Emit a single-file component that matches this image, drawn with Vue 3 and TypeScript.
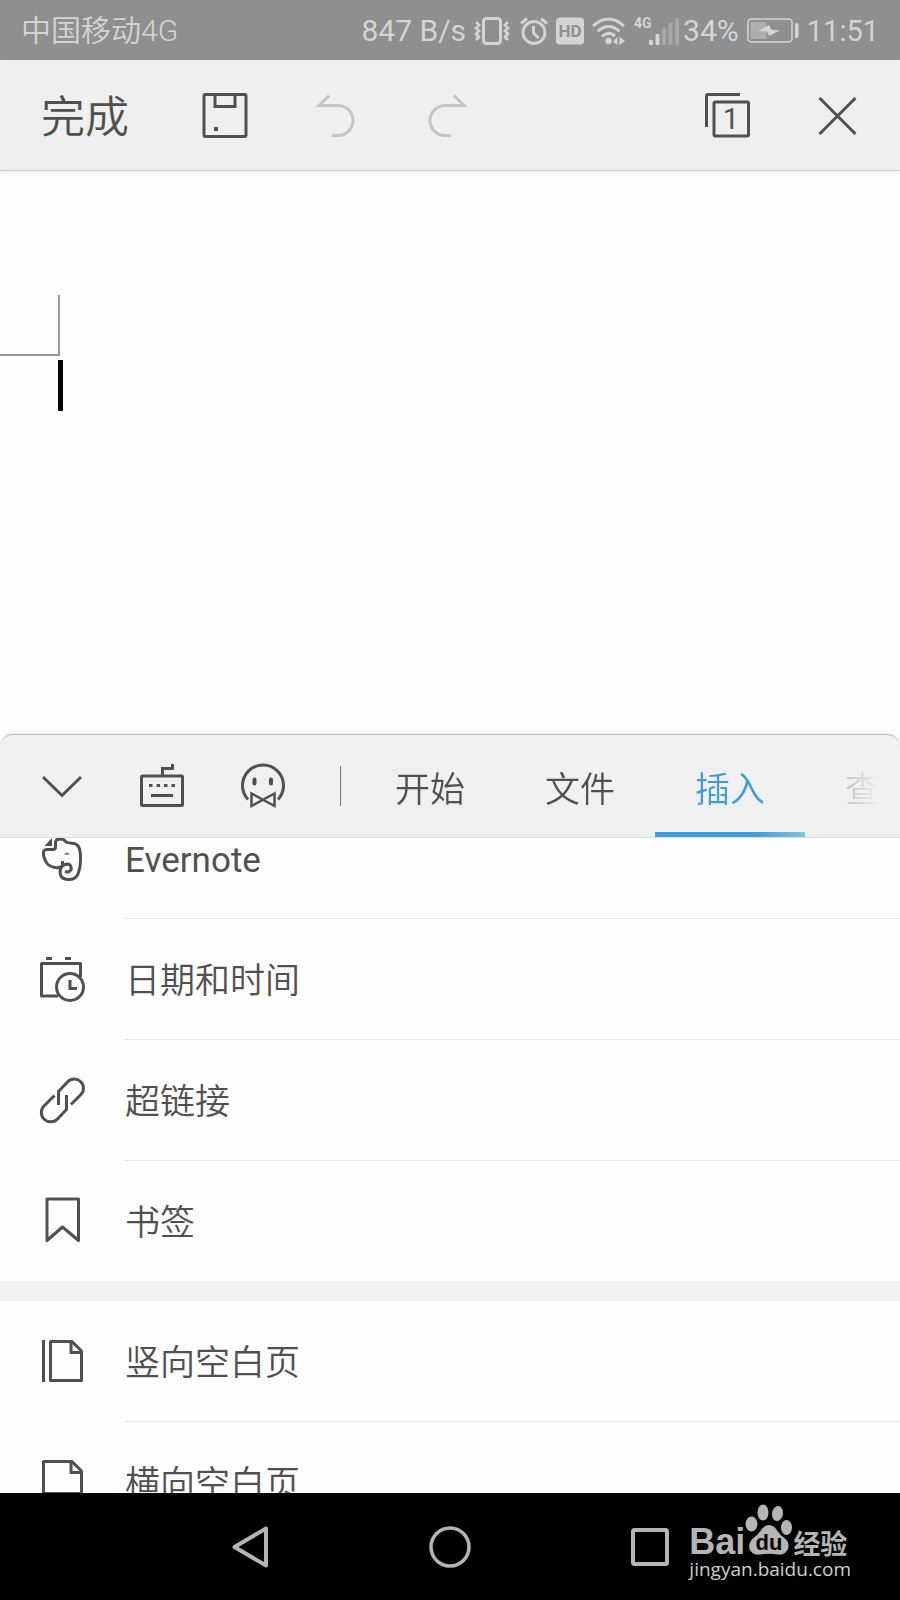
<script setup lang="ts">
import { onMounted, ref } from 'vue'

interface Row {
  id: string
  label: string
}

const tabs: string[] = ['开始', '文件', '插入', '查看']
const activeTab = ref<string>('插入')

const groups: Row[][] = [
  [
    { id: 'evernote', label: 'Evernote' },
    { id: 'datetime', label: '日期和时间' },
    { id: 'link', label: '超链接' },
    { id: 'bookmark', label: '书签' },
  ],
  [
    { id: 'portrait', label: '竖向空白页' },
    { id: 'landscape', label: '横向空白页' },
  ],
]

const list = ref<HTMLElement | null>(null)

onMounted(() => {
  if (list.value) list.value.scrollTop = 40
})
</script>

<template>
  <div class="screen">
    <header class="status">
      <span class="carrier">中国移动4G</span>
      <div class="status-right">
        <span>847 B/s</span>
        <svg class="vibrate" width="36" height="28" viewBox="0 0 36 28" fill="none" stroke="currentColor" stroke-width="3">
          <rect x="9.500" y="1.500" width="17" height="25" rx="3" />
          <path d="M2 5l3 3-3 3 3 3-3 3 3 3-3 3M34 5l-3 3 3 3-3 3 3 3-3 3 3 3" stroke-width="2.800" />
        </svg>
        <svg width="28" height="28" viewBox="0 0 28 28" fill="none" stroke="currentColor" stroke-width="3">
          <circle cx="14" cy="15.500" r="11" />
          <path d="M13.500 9v7l5 5M1 6.500L7 1.500M27 6.500L21 1.500" />
        </svg>
        <svg width="28" height="28" viewBox="0 0 28 28">
          <rect width="28" height="27" y="0.500" rx="4" fill="currentColor" />
          <text x="14" y="20" text-anchor="middle" class="hd">HD</text>
        </svg>
        <svg width="34" height="28" viewBox="0 0 34 28" fill="none" stroke="currentColor" stroke-width="3">
          <path d="M1 9Q16.500-5 32 9M5.500 14.500Q16.500 4.500 27.500 14.500M10 19.500Q16.500 13.500 23 19" />
          <circle cx="16.500" cy="24" r="3.200" fill="currentColor" stroke="none" />
          <path d="M21 25l4.500-5.500V28zM27.500 19.500L33 24l-5.500 4z" fill="currentColor" stroke="none" />
        </svg>
        <svg width="45" height="30" viewBox="0 0 45 30" fill="currentColor">
          <text x="0" y="12" class="net">4G</text>
          <rect x="15" y="24" width="4" height="5" rx="1" />
          <rect x="21.500" y="18" width="4" height="11" rx="1" />
          <g opacity="0.350">
            <rect x="28" y="12" width="4" height="17" rx="1" />
            <rect x="34.500" y="7" width="4" height="22" rx="1" />
            <rect x="41" y="2" width="4" height="27" rx="1" />
          </g>
        </svg>
        <span class="percent">34%</span>
        <svg width="52" height="26" viewBox="0 0 52 26" fill="none">
          <rect x="1" y="1" width="44" height="23" rx="3.500" stroke="currentColor" stroke-width="1.600" />
          <rect x="3.500" y="4" width="16" height="17" fill="currentColor" opacity="0.450" />
          <path d="M11 13l11-6 2 4.500 9 1L22 18l-2-4.500z" fill="currentColor" />
          <rect x="48" y="5" width="3.500" height="15" rx="1.500" fill="currentColor" />
        </svg>
        <span class="time">11:51</span>
      </div>
    </header>

    <div class="toolbar">
      <button class="done" type="button">完成</button>
      <button class="tool" type="button" aria-label="保存">
        <svg width="48" height="48" viewBox="0 0 48 48" fill="none" stroke="currentColor" stroke-width="3">
          <rect x="3" y="2.500" width="42" height="42" rx="1.500" />
          <path d="M14 3v11.500h20V3" />
          <rect x="13" y="35" width="4" height="4" fill="currentColor" stroke="none" />
        </svg>
      </button>
      <button class="tool faded" type="button" aria-label="撤销">
        <svg width="48" height="48" viewBox="0 0 48 48" fill="none" stroke="currentColor" stroke-width="3">
          <path d="M18 3.500L8 13.500H27A15 15 0 0 1 27 43.500H21" />
        </svg>
      </button>
      <button class="tool faded" type="button" aria-label="恢复">
        <svg width="48" height="48" viewBox="0 0 48 48" fill="none" stroke="currentColor" stroke-width="3">
          <path d="M33 3.500L43 13.500H24A15 15 0 0 0 24 43.500H30" />
        </svg>
      </button>
      <span class="spacer"></span>
      <button class="tool" type="button" aria-label="文档窗口">
        <svg width="48" height="48" viewBox="0 0 48 48" fill="none" stroke="currentColor" stroke-width="3">
          <path d="M2.500 35V4Q2.500 2.500 4 2.500H36" />
          <rect x="10" y="10" width="34.500" height="34" rx="1.500" />
          <text x="27" y="37" text-anchor="middle" class="count">1</text>
        </svg>
      </button>
      <button class="tool" type="button" aria-label="关闭">
        <svg width="48" height="48" viewBox="0 0 48 48" fill="none" stroke="currentColor" stroke-width="3">
          <path d="M5.500 6L41.500 42M41.500 6L5.500 42" />
        </svg>
      </button>
    </div>

    <main class="page">
      <div class="margin-mark"></div>
      <div class="caret"></div>
    </main>

    <section class="panel">
      <div class="panel-head">
        <button class="mode" type="button" aria-label="收起">
          <svg width="48" height="48" viewBox="0 0 48 48" fill="none" stroke="currentColor" stroke-width="3">
            <path d="M5 15L24 33.500L43 15" />
          </svg>
        </button>
        <button class="mode" type="button" aria-label="键盘">
          <svg width="48" height="48" viewBox="0 0 48 48" fill="none" stroke="currentColor" stroke-width="3">
            <rect x="3.500" y="14" width="41" height="29.500" rx="1" />
            <path d="M24.500 13.500V6.500H34.500V2M13 33.500H35" />
            <path d="M11 23.500h26" stroke-dasharray="3.500 4" />
          </svg>
        </button>
        <button class="mode" type="button" aria-label="助手">
          <svg width="48" height="48" viewBox="0 0 48 48" fill="none" stroke="currentColor" stroke-width="3">
            <path d="M10 37.500A20.500 20.500 0 1 1 40 37.500" />
            <path d="M13.500 31.500V44L36.500 31.500V44Z" stroke-width="2.500" />
            <path d="M16.500 17.500v4M33 17.500v4" stroke-width="4" stroke-linecap="round" />
          </svg>
        </button>
        <span class="rule"></span>
        <nav class="tabs">
          <button
            v-for="tab in tabs"
            :key="tab"
            type="button"
            class="tab"
            :class="{ active: tab === activeTab }"
            @click="activeTab = tab"
          >
            {{ tab }}
          </button>
        </nav>
      </div>

      <div ref="list" class="list">
        <div v-for="(group, g) in groups" :key="g" class="group">
          <button v-for="row in group" :key="row.id" type="button" class="row">
            <svg width="48" height="48" viewBox="0 0 48 48" fill="none" stroke="currentColor" stroke-width="3">
              <template v-if="row.id === 'evernote'">
                <path d="M14 4V12H6.500Z" fill="currentColor" stroke="none" />
                <path
                  d="M24.500 27V31.500Q22 34.500 17 33.500Q10 32.500 7.500 27Q5 22 5.500 18Q6 15.500 9 15.500H15Q17.500 15.500 17.500 13V8Q18 5 22 5Q26.500 5 28 8Q30 9 36 9.500Q40 10 41.500 15Q43 20 42.500 27Q42 36 39.500 41Q37 45.500 31 45.500Q24 45.500 22.500 41Q21 35 25 31.500Q29 29 32 31Q34.500 34.500 32 37Q30 38.500 27 37.500"
                />
                <path d="M26 20.500Q29 17 32 20.500Z" fill="currentColor" stroke="none" />
              </template>
              <template v-else-if="row.id === 'datetime'">
                <path d="M20 41H3.500V8.500H42.500V22" stroke-linejoin="round" />
                <path d="M8 3.500h6M27 3.500h6" />
                <circle cx="32" cy="32" r="13.500" />
                <path d="M32 25v8.500h7" />
              </template>
              <path
                v-else-if="row.id === 'link'"
                d="M20.500 29V15.500L29.500 6A9 9 0 0 1 43 18.500L33 28.500M16.500 19.500L6 30A9 9 0 0 0 19.500 43L28.500 33.500V19"
              />
              <path v-else-if="row.id === 'bookmark'" d="M9 3H40.500V44.500L24.500 31L9 44.500Z" stroke-linejoin="round" />
              <template v-else-if="row.id === 'portrait'">
                <path d="M5.500 3V45" />
                <path d="M12.500 4.500H34L43.500 14V43.500H12.500ZM33 4.500V15.500H43.500" stroke-linejoin="round" />
              </template>
              <path v-else d="M5.500 4.500H34L43.500 14V36.500H5.500ZM33 4.500V15.500H43.500" stroke-linejoin="round" />
            </svg>
            <span class="label" :class="{ latin: row.id === 'evernote' }">{{ row.label }}</span>
          </button>
        </div>
      </div>
    </section>

    <footer class="navbar">
      <button class="nav" type="button" aria-label="返回">
        <svg width="48" height="48" viewBox="0 0 48 48" fill="none" stroke="currentColor" stroke-width="4" stroke-linejoin="round">
          <path d="M40 5.500V42.500L8.500 24Z" />
        </svg>
      </button>
      <button class="nav" type="button" aria-label="主页">
        <svg width="48" height="48" viewBox="0 0 48 48" fill="none" stroke="currentColor" stroke-width="3.500">
          <circle cx="24" cy="24" r="19" />
        </svg>
      </button>
      <button class="nav" type="button" aria-label="最近任务">
        <svg width="48" height="48" viewBox="0 0 48 48" fill="none" stroke="currentColor" stroke-width="4">
          <rect x="7" y="7" width="34" height="34" rx="1.500" />
        </svg>
      </button>
      <div class="brand">
        <div class="brand-top">
          <span class="bai">Bai</span>
          <svg width="48" height="52" viewBox="0 0 48 52" fill="currentColor">
            <ellipse cx="6.500" cy="20" rx="6" ry="7.500" />
            <ellipse cx="18" cy="8.500" rx="5.500" ry="8" />
            <ellipse cx="32.500" cy="9.500" rx="5.500" ry="7.500" transform="rotate(8 32.5 9.500)" />
            <ellipse cx="41.500" cy="23.500" rx="5.500" ry="7.500" />
            <path d="M24 21Q29 21 32.500 27Q35 31 40 34.500Q45 39 43 45Q40 51.500 33 50.500Q24 49 15 50.500Q7 51.500 4.500 45Q3 39 8 34.500Q12.500 31 15.500 27Q19 21 24 21Z" />
            <text x="24" y="46" text-anchor="middle" class="du">du</text>
          </svg>
          <span class="jingyan">经验</span>
        </div>
        <span class="site">jingyan.baidu.com</span>
      </div>
    </footer>
  </div>
</template>

<style>
body {
  margin: 0;
}
</style>

<style scoped>
.screen {
  display: flex;
  flex-direction: column;
  height: 100vh;
  overflow: hidden;
  background: #fefefe;
  color: #505050;
  font-family: Roboto, "Noto Sans CJK SC", sans-serif;
}
button {
  margin: 0;
  padding: 0;
  border: 0;
  background: none;
  color: inherit;
  font: inherit;
  cursor: pointer;
}
svg {
  display: block;
  flex: none;
}
.status {
  display: flex;
  box-sizing: border-box;
  flex: none;
  align-items: center;
  justify-content: space-between;
  height: 60px;
  padding: 2px 21px 0;
  background: #8f8f8f;
  color: #d4d4d4;
  font-size: 30px;
  line-height: 36px;
  white-space: nowrap;
}
.carrier {
  font-weight: 350;
}
.status-right {
  display: flex;
  align-items: center;
  gap: 8px;
}
.vibrate {
  margin-right: 2px;
}
.percent {
  margin-left: -4px;
}
.time {
  font-size: 29px;
}
.hd {
  fill: #8f8f8f;
  stroke: none;
  font-size: 17px;
  font-weight: 700;
}
.net {
  stroke: none;
  font-size: 14px;
  font-weight: 700;
}
.toolbar {
  display: flex;
  box-sizing: border-box;
  flex: none;
  align-items: center;
  height: 111px;
  padding: 2px 7px 0 41px;
  border-bottom: 1px solid #d0d0d0;
  box-shadow: 0 1px 3px #00000018;
  background: #efefef;
}
.done {
  width: 129px;
  padding-top: 4px;
  font-size: 44px;
  font-weight: 350;
  line-height: 56px;
  text-align: left;
}
.tool {
  display: flex;
  justify-content: center;
  width: 110px;
}
.faded {
  color: #c5c5c5;
}
.spacer {
  flex: 1;
}
.count {
  fill: currentColor;
  stroke: none;
  font-size: 29px;
}
.page {
  flex: 1;
  min-height: 0;
  padding-top: 124px;
}
.margin-mark {
  width: 58px;
  height: 59px;
  border: solid #999;
  border-width: 0 2px 2px 0;
}
.caret {
  width: 5px;
  height: 51px;
  margin: 4px 0 0 58px;
  background: #000;
}
.panel {
  display: flex;
  flex: none;
  flex-direction: column;
}
.panel-head {
  display: flex;
  align-items: center;
  height: 102px;
  padding: 0 20px 0 12px;
  border-top: 1px solid #bbb;
  border-bottom: 1px solid #dedede;
  border-radius: 13px 13px 0 0;
  box-shadow: 0 -2px 5px #0000000d;
  background: #f0f0f0;
}
.mode {
  display: flex;
  justify-content: center;
  width: 100px;
}
.rule {
  width: 1px;
  height: 40px;
  margin: 0 14px 0 28px;
  background: #777;
}
.tabs {
  display: flex;
  flex: 1;
  align-self: stretch;
  overflow: hidden;
  mask-image: linear-gradient(to left, transparent, #000 125px);
}
.tab {
  flex: none;
  width: 150px;
  border-top: 5px solid transparent;
  border-bottom: 5px solid transparent;
  font-size: 35px;
  font-weight: 350;
}
.tab.active {
  border-bottom-color: #3d9edb;
  color: #3d9edb;
}
.list {
  height: calc(41vh - 1px);
  overflow-y: auto;
  scrollbar-width: none;
  background: #fefefe;
}
.group + .group {
  border-top: 20px solid #f2f2f2;
}
.row {
  display: flex;
  align-items: center;
  gap: 39px;
  width: 100%;
  height: 121px;
  padding-left: 38px;
  text-align: left;
}
.row svg {
  margin-bottom: 2px;
}
.row:last-child {
  height: 120px;
}
.label {
  display: flex;
  box-sizing: border-box;
  flex: 1;
  align-items: center;
  height: 121px;
  padding-bottom: 3px;
  border-bottom: 1px solid #e6e6e6;
  font-size: 35px;
  font-weight: 350;
}
.latin {
  padding: 4px 0 0;
  font-weight: 400;
}
.row:last-child .label {
  height: 120px;
  border-bottom: 0;
}
.navbar {
  position: relative;
  display: flex;
  flex: none;
  align-items: center;
  justify-content: center;
  height: 107px;
  background: #000;
  color: #b5b5b5;
}
.nav {
  display: flex;
  justify-content: center;
  width: 200px;
}
.brand {
  position: absolute;
  right: 49px;
  bottom: 18px;
  pointer-events: none;
}
.brand-top {
  display: flex;
  align-items: flex-end;
}
.bai {
  font-family: "Liberation Sans", sans-serif;
  font-size: 36px;
  font-weight: 700;
  line-height: 28px;
}
.du {
  fill: #000;
  font-family: "Liberation Sans", sans-serif;
  font-size: 22px;
  font-weight: 700;
}
.jingyan {
  font-size: 27px;
  font-weight: 700;
  line-height: 22px;
}
.site {
  display: block;
  color: #cfcfcf;
  font-family: "Open Sans", sans-serif;
  font-size: 19px;
  line-height: 26px;
}
</style>
